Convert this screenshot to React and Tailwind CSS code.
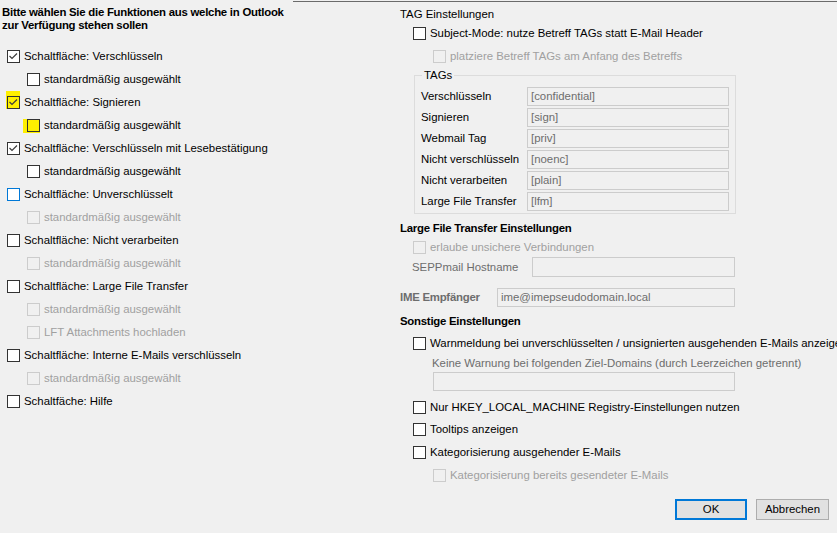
import React from 'react';

const FONT = { fontFamily: '"Liberation Sans", Arial, sans-serif' };

// Win32-style checkbox, 13x13 with a thin check glyph
const Box = ({ checked, disabled, focus, hl }) => {
  const border = disabled ? 'border-[#cccccc]' : focus ? 'border-[#0078d7]' : 'border-[#333333]';
  const bg = hl ? 'bg-[#fff000]' : disabled ? 'bg-[#f0f0f0]' : 'bg-white';
  return (
    <div className="relative w-[13px] h-[13px] shrink-0">
      {hl === 'tall' && <div className="absolute -left-[1px] -top-[5px] w-[14px] h-[18px] bg-[#fff000]" />}
      {hl === 'wide' && <div className="absolute -left-[4px] top-0 w-[17px] h-[14px] bg-[#fff000]" />}
      <div className={`relative w-[13px] h-[13px] border ${border} ${bg}`}>
        {checked && (
          <svg width="11" height="11" viewBox="0 0 11 11" className="absolute left-0 top-0">
            <polyline points="1.5,5 4,7.5 9,2.5" fill="none" stroke="#3c3c3c" strokeWidth="1.2" />
          </svg>
        )}
      </div>
    </div>
  );
};

const CheckRow = ({ label, checked, disabled, focus, hl, className = '' }) => (
  <div className={`flex items-center gap-[4px] ${className}`}>
    <Box checked={checked} disabled={disabled} focus={focus} hl={hl} />
    <span className={`whitespace-nowrap ${disabled ? 'text-[#a0a0a0]' : 'text-black'}`}>{label}</span>
  </div>
);

const Field = ({ value, className = '' }) => (
  <div className={`h-[19px] shrink-0 border border-[#cccccc] bg-[#f0f0f0] text-[#6d6d6d] pl-[3px] flex items-center ${className}`}>
    {value}
  </div>
);

const buttons = [
  { label: 'Schaltfläche: Verschlüsseln', checked: true },
  { label: 'standardmäßig ausgewählt', sub: true },
  { label: 'Schaltfläche: Signieren', checked: true, hl: 'tall' },
  { label: 'standardmäßig ausgewählt', sub: true, hl: 'wide' },
  { label: 'Schaltfläche: Verschlüsseln mit Lesebestätigung', checked: true },
  { label: 'standardmäßig ausgewählt', sub: true },
  { label: 'Schaltfläche: Unverschlüsselt', focus: true },
  { label: 'standardmäßig ausgewählt', sub: true, disabled: true },
  { label: 'Schaltfläche: Nicht verarbeiten' },
  { label: 'standardmäßig ausgewählt', sub: true, disabled: true },
  { label: 'Schaltfläche: Large File Transfer' },
  { label: 'standardmäßig ausgewählt', sub: true, disabled: true },
  { label: 'LFT Attachments hochladen', sub: true, disabled: true },
  { label: 'Schaltfläche: Interne E-Mails verschlüsseln' },
  { label: 'standardmäßig ausgewählt', sub: true, disabled: true },
  { label: 'Schaltfäche: Hilfe' },
];

const tags = [
  ['Verschlüsseln', '[confidential]'],
  ['Signieren', '[sign]'],
  ['Webmail Tag', '[priv]'],
  ['Nicht verschlüsseln', '[noenc]'],
  ['Nicht verarbeiten', '[plain]'],
  ['Large File Transfer', '[lfm]'],
];

export default function App() {
  return (
    <div className="w-[837px] h-[533px] bg-[#f0f0f0] overflow-hidden text-[11.4px] leading-[13px] text-black" style={FONT}>
      {/* tab page edge */}
      <div className="flex h-[2px]">
        <div className="w-[293px]" />
        <div className="flex-1 border-b border-[#6b6b6b]" />
      </div>

      <div className="flex">
        {/* left: button selection */}
        <div className="w-[398px] shrink-0">
          <div className="mt-[4px] ml-[2px] font-bold tracking-[-0.25px]">
            <div>Bitte wählen Sie die Funktionen aus welche in Outlook</div>
            <div>zur Verfügung stehen sollen</div>
          </div>
          <div className="mt-[13px]">
            {buttons.map((b, i) => (
              <CheckRow
                key={i}
                className={`h-[23px] ${b.sub ? 'pl-[27px]' : 'pl-[7px]'}`}
                label={b.label}
                checked={b.checked}
                disabled={b.disabled}
                focus={b.focus}
                hl={b.hl}
              />
            ))}
          </div>
        </div>

        {/* right: settings */}
        <div className="w-[439px] min-w-0 shrink-0 flex flex-col">
          <div className="mt-[4px] h-[16px] flex items-center pl-[2px]">TAG Einstellungen</div>
          <CheckRow className="mt-[3px] h-[16px] pl-[15px]" label="Subject-Mode: nutze Betreff TAGs statt E-Mail Header" />
          <CheckRow className="mt-[7px] h-[16px] pl-[35px]" label="platziere Betreff TAGs am Anfang des Betreffs" disabled />

          <fieldset className="mt-[5px] ml-[16px] w-[322px] border border-[#dcdcdc] px-[6px] pb-[2px]">
            <legend className="ml-[1px] px-[2px]">TAGs</legend>
            <div className="mt-[5px] flex flex-col gap-[2px]">
              {tags.map(([k, v]) => (
                <div key={k} className="flex items-center h-[19px]">
                  <div className="w-[106px] shrink-0 whitespace-nowrap">{k}</div>
                  <Field value={v} className="w-[202px]" />
                </div>
              ))}
            </div>
          </fieldset>

          <div className="mt-[6px] h-[16px] flex items-center pl-[2px] font-bold tracking-[-0.25px]">Large File Transfer Einstellungen</div>
          <CheckRow className="mt-[3px] h-[16px] pl-[15px]" label="erlaube unsichere Verbindungen" disabled />
          <div className="mt-[2px] h-[20px] flex items-center">
            <div className="w-[134px] shrink-0 pl-[14px] text-[#6d6d6d]">SEPPmail Hostname</div>
            <Field value="" className="w-[203px] h-[20px]" />
          </div>

          <div className="mt-[11px] h-[19px] flex items-center">
            <div className="w-[99px] shrink-0 pl-[2px] font-bold tracking-[-0.25px] text-[#6d6d6d]">IME Empfänger</div>
            <Field value="ime@imepseudodomain.local" className="w-[238px]" />
          </div>

          <div className="mt-[6px] h-[16px] flex items-center pl-[2px] font-bold tracking-[-0.25px]">Sonstige Einstellungen</div>
          <CheckRow className="mt-[6px] h-[16px] pl-[15px]" label="Warnmeldung bei unverschlüsselten / unsignierten ausgehenden E-Mails anzeigen" />
          <div className="mt-[4px] h-[16px] flex items-center pl-[34px] text-[#6d6d6d] whitespace-nowrap">
            Keine Warnung bei folgenden Ziel-Domains (durch Leerzeichen getrennt)
          </div>
          <Field value="" className="mt-[1px] ml-[35px] w-[302px]" />
          <CheckRow className="mt-[8px] h-[16px] pl-[15px]" label="Nur HKEY_LOCAL_MACHINE Registry-Einstellungen nutzen" />
          <CheckRow className="mt-[6px] h-[16px] pl-[15px]" label="Tooltips anzeigen" />
          <CheckRow className="mt-[7px] h-[16px] pl-[15px]" label="Kategorisierung ausgehender E-Mails" />
          <CheckRow className="mt-[7px] h-[16px] pl-[35px]" label="Kategorisierung bereits gesendeter E-Mails" disabled />

          <div className="mt-[16px] flex justify-end gap-[9px] pr-[8px]">
            <button className="w-[72px] h-[21px] border-2 border-[#0078d7] bg-[#e1e1e1] text-black">OK</button>
            <button className="w-[73px] h-[21px] border border-[#adadad] bg-[#e1e1e1] text-black">Abbrechen</button>
          </div>
        </div>
      </div>
    </div>
  );
}
